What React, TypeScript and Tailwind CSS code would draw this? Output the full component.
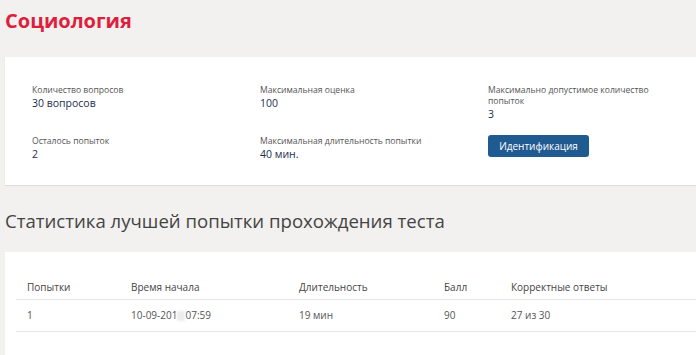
export default function App() {
  return (
    <div className="min-h-[355px] w-[696px] overflow-hidden bg-[#f2f1ef] pl-[5px] font-['Open_Sans',sans-serif] text-[#333]">
      <h1 className="pt-[8px] text-[20px] leading-[26px] font-bold text-[#dd1f3d]">Социология</h1>

      {/* Test info */}
      <div className="mt-[23px] h-[128px] bg-white pl-[27px] pt-[28px] shadow-[0_1px_1px_rgba(0,0,0,0.08)]">
        <div className="grid grid-cols-[228px_228px_1fr]">
          <div className="flex flex-col gap-[26px]">
            <Info label="Количество вопросов" value="30 вопросов" />
            <Info label="Осталось попыток" value="2" />
          </div>
          <div className="flex flex-col gap-[26px]">
            <Info label="Максимальная оценка" value="100" />
            <Info label="Максимальная длительность попытки" value="40 мин." />
          </div>
          <div className="flex flex-col items-start">
            <Info label={"Максимально допустимое количество\nпопыток"} value="3" />
            <button className="mt-[14px] h-[22px] w-[101px] rounded-[3px] bg-[#1f5a90] text-[10px] text-white">
              Идентификация
            </button>
          </div>
        </div>
      </div>

      <h2 className="mt-[23px] text-[18.6px] leading-[26px] text-[#444]">
        Статистика лучшей попытки прохождения теста
      </h2>

      {/* Best attempt */}
      <div className="mt-[18px] h-[110px] bg-white pl-[11px] pt-[24px]">
        <table className="w-full table-fixed border-collapse text-[10px] text-[#444]">
          <colgroup>
            <col className="w-[115px]" />
            <col className="w-[168px]" />
            <col className="w-[145px]" />
            <col className="w-[67px]" />
            <col />
          </colgroup>
          <thead>
            <tr className="h-[23px] border-b border-[#e6e6e6] text-left">
              <th className="pl-[11px] font-normal">Попытки</th>
              <th className="font-normal">Время начала</th>
              <th className="font-normal">Длительность</th>
              <th className="font-normal">Балл</th>
              <th className="font-normal">Корректные ответы</th>
            </tr>
          </thead>
          <tbody>
            <tr className="h-[32px] border-b border-[#e6e6e6] text-[#555]">
              <td className="pl-[11px]">1</td>
              <td>
                10-09-201
                <span className="inline-block h-[10px] w-[8px] bg-[#ececec] align-middle blur-[1px]" />
                07:59
              </td>
              <td>19 мин</td>
              <td>90</td>
              <td>27 из 30</td>
            </tr>
          </tbody>
        </table>
      </div>
    </div>
  );
}

function Info({ label, value }: { label: string; value: string }) {
  return (
    <div>
      <div className="whitespace-pre-line text-[8.6px] leading-[11px] text-[#555]">{label}</div>
      <div className="mt-[1px] text-[10.5px] leading-[13px] text-[#1e2d4d]">{value}</div>
    </div>
  );
}
